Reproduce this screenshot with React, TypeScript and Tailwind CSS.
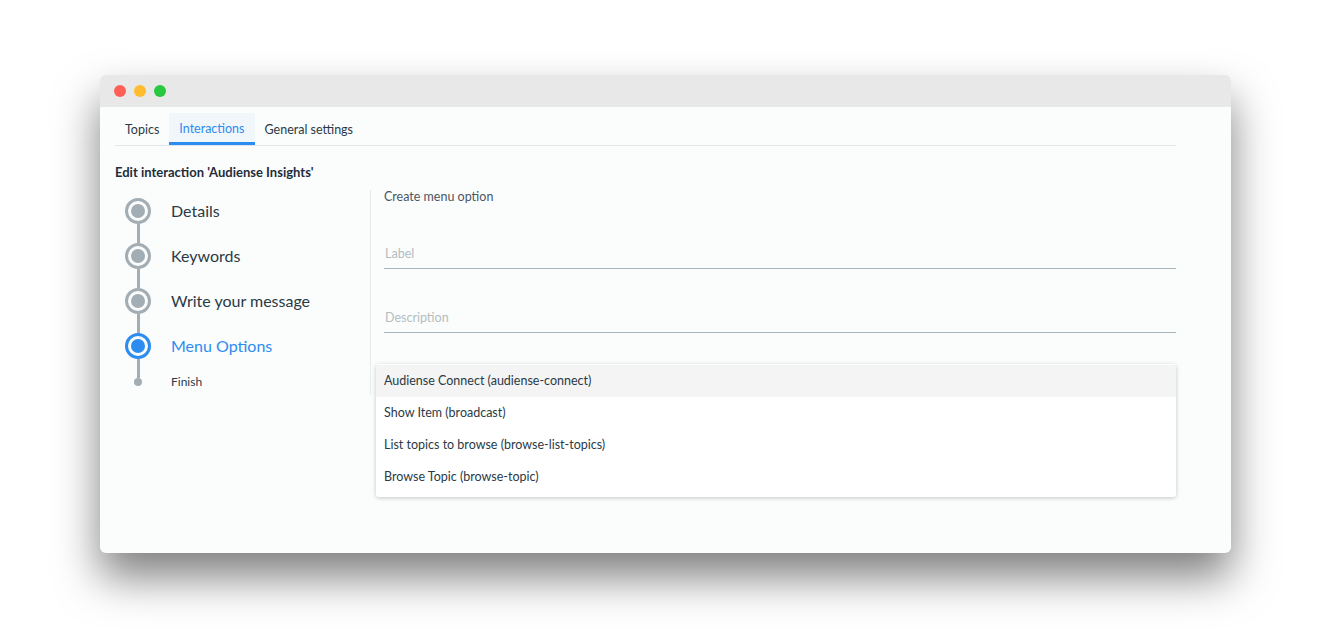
import React from 'react';

const font = { fontFamily: 'Lato, "Open Sans", sans-serif' };

const steps = [
  { label: 'Details', done: true },
  { label: 'Keywords', done: true },
  { label: 'Write your message', done: true },
  { label: 'Menu Options', active: true },
];

const options = [
  'Audiense Connect (audiense-connect)',
  'Show Item (broadcast)',
  'List topics to browse (browse-list-topics)',
  'Browse Topic (browse-topic)',
];

function Stepper() {
  return (
    <div className="flex flex-col">
      {steps.map((s) => (
        <div key={s.label} className="flex items-start">
          <div className="flex w-[26px] flex-col items-center">
            <div
              className={`flex h-[26px] w-[26px] items-center justify-center rounded-full border-[3px] ${
                s.active ? 'border-[#2d8cf0]' : 'border-[#a3adb4]'
              }`}
            >
              <div className={`h-[14px] w-[14px] rounded-full ${s.active ? 'bg-[#2d8cf0]' : 'bg-[#a3adb4]'}`} />
            </div>
            <div className="h-[19px] w-[3px] bg-[#a3adb4]" />
          </div>
          <div
            className={`ml-[20px] flex h-[25px] items-center text-[16px] ${
              s.active ? 'text-[#2d8cf0]' : 'text-[#2a3a46]'
            }`}
          >
            {s.label}
          </div>
        </div>
      ))}
      <div className="flex h-[8px] items-center">
        <div className="flex w-[26px] justify-center">
          <div className="h-[8px] w-[8px] rounded-full bg-[#a3adb4]" />
        </div>
        <div className="ml-[20px] text-[12px] leading-[14px] text-[#2a3a46]">Finish</div>
      </div>
    </div>
  );
}

export default function App() {
  return (
    <div className="min-h-screen bg-white pt-[75px] pl-[100px]" style={font}>
      <div className="w-[1131px] h-[478px] overflow-hidden rounded-[6px] bg-[#fbfcfc] shadow-[0_24px_44px_rgba(0,0,0,0.5)]">
        <div className="flex h-[32px] items-center gap-[8px] bg-[#e8e8e8] pl-[14px]">
          <span className="h-[12px] w-[12px] rounded-full bg-[#fe5f57]" />
          <span className="h-[12px] w-[12px] rounded-full bg-[#febc2e]" />
          <span className="h-[12px] w-[12px] rounded-full bg-[#28c840]" />
        </div>

        <div className="pl-[15px] pr-[55px] pt-[6px]">
          <div className="flex border-b border-[#e3e6e8] text-[12.5px]">
            <div className="flex h-[32px] items-center px-[10px] pt-[2px] text-[#2a3a46]">Topics</div>
            <div className="-mb-px flex h-[32px] items-center border-b-[3px] border-[#2d8cf0] bg-[#f1f6fa] px-[10px] pt-[4px] text-[#2d8cf0]">
              Interactions
            </div>
            <div className="flex h-[32px] items-center px-[10px] pt-[2px] text-[#2a3a46]">General settings</div>
          </div>

          <div className="mt-[18px] text-[13px] font-bold leading-[16px] text-[#1f2d3a]">
            Edit interaction 'Audiense Insights'
          </div>

          <div className="mt-[10px] flex items-start">
            <div className="h-[205px] w-[256px] shrink-0 border-r border-[#e8ebed] pl-[10px] pt-[8px]">
              <Stepper />
            </div>

            <div className="flex-1 pl-[5px]">
              <div className="ml-[8px] text-[12.5px] leading-[14px] text-[#4a5762]">Create menu option</div>
              <div className="ml-[8px] mt-[36px] flex h-[29px] items-center border-b border-[#a9b3bb] pl-[1px] text-[12.5px] text-[#b4bcc2]">
                Label
              </div>
              <div className="ml-[8px] mt-[35px] flex h-[29px] items-center border-b border-[#a9b3bb] pl-[1px] text-[12.5px] text-[#b4bcc2]">
                Description
              </div>
              <div className="mt-[31px] overflow-hidden rounded-[3px] bg-white pt-[1px] pb-[4px] shadow-[0_1px_4px_rgba(0,0,0,0.22)]">
                {options.map((o, i) => (
                  <div
                    key={o}
                    className={`flex h-[32px] items-center px-[8px] pt-[1px] text-[12.5px] text-[#2a3a46] ${
                      i === 0 ? 'bg-[#f4f4f4]' : ''
                    }`}
                  >
                    {o}
                  </div>
                ))}
              </div>
            </div>
          </div>
        </div>
      </div>
    </div>
  );
}
